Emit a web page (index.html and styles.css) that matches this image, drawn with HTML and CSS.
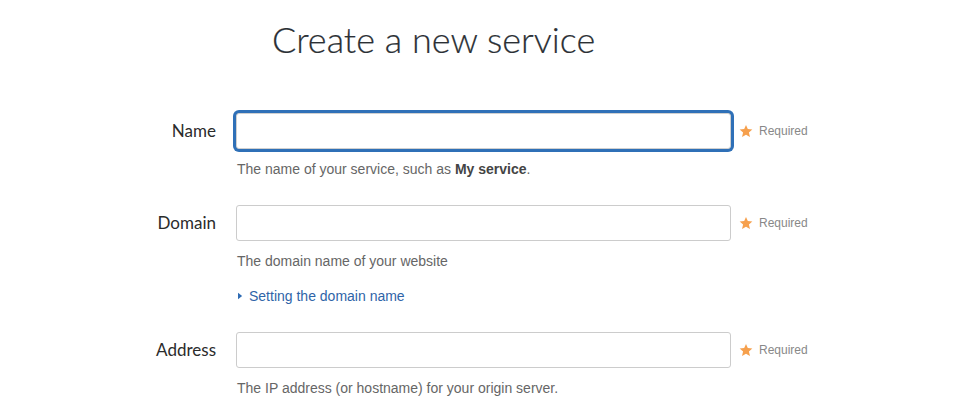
FILE: index.html
```html
<!DOCTYPE html>
<html>
<head>
<meta charset="utf-8">
<link rel="stylesheet" href="styles.css">
</head>
<body>
<div class="page">
  <h1 class="title">Create a new service</h1>
  <form class="form">
    <div class="row">
      <label class="label" for="name">Name</label>
      <div class="field">
        <input class="input focused" id="name" type="text">
        <p class="help">The name of your service, such as <b>My service</b>.</p>
      </div>
      <div class="req"><svg class="star" viewBox="0 0 24 24" width="14" height="14"><path d="M12 1.5l3.1 7.2 7.8.7-5.9 5.2 1.8 7.7L12 18.3l-6.8 4 1.8-7.7L1.1 9.4l7.8-.7z" fill="#f6a04d"/></svg><span>Required</span></div>
    </div>
    <div class="row">
      <label class="label" for="domain">Domain</label>
      <div class="field">
        <input class="input" id="domain" type="text">
        <p class="help">The domain name of your website</p>
        <a class="link" href="#"><svg class="tri" viewBox="0 0 6 8" width="5" height="8"><path d="M0 0L5 4L0 8z" fill="#2f6cb4"/></svg>Setting the domain name</a>
      </div>
      <div class="req"><svg class="star" viewBox="0 0 24 24" width="14" height="14"><path d="M12 1.5l3.1 7.2 7.8.7-5.9 5.2 1.8 7.7L12 18.3l-6.8 4 1.8-7.7L1.1 9.4l7.8-.7z" fill="#f6a04d"/></svg><span>Required</span></div>
    </div>
    <div class="row">
      <label class="label" for="address">Address</label>
      <div class="field">
        <input class="input" id="address" type="text">
        <p class="help">The IP address (or hostname) for your origin server.</p>
      </div>
      <div class="req"><svg class="star" viewBox="0 0 24 24" width="14" height="14"><path d="M12 1.5l3.1 7.2 7.8.7-5.9 5.2 1.8 7.7L12 18.3l-6.8 4 1.8-7.7L1.1 9.4l7.8-.7z" fill="#f6a04d"/></svg><span>Required</span></div>
    </div>
  </form>
</div>
</body>
</html>
```
FILE: styles.css
```css
html, body {
  margin: 0;
  padding: 0;
  background: #fff;
}
.page {
  width: 973px;
  height: 409px;
  overflow: hidden;
}
.title {
  margin: 0;
  padding: 16px 0 0 272px;
  font-family: Lato, "Open Sans", sans-serif;
  font-weight: 300;
  font-size: 36px;
  line-height: 46px;
  color: #2b3035;
  -webkit-text-stroke: 0.2px #2b3035;
}
.form {
  display: flex;
  flex-direction: column;
  gap: 26px;
  padding-top: 51px;
}
.row {
  display: grid;
  grid-template-columns: 216px 495px auto;
  column-gap: 20px;
  align-items: start;
}
.label {
  text-align: right;
  font-family: Lato, "Open Sans", sans-serif;
  font-size: 17px;
  line-height: 36px;
  color: #2b2b2b;
}
.field {
  display: flex;
  flex-direction: column;
}
.input {
  box-sizing: border-box;
  width: 495px;
  height: 36px;
  margin: 0;
  border: 1px solid #cccccc;
  border-radius: 3px;
  background: #fff;
  outline: none;
}
.input.focused {
  box-shadow: 0 0 0 3px #2f70b7;
  border-color: #d0d0d0;
  border-radius: 3px;
}
.help {
  margin: 10px 0 0 1px;
  font-family: "Liberation Sans", Arial, sans-serif;
  font-size: 14px;
  line-height: 20px;
  color: #666;
}
.help b {
  color: #444;
}
.link {
  display: flex;
  align-items: center;
  gap: 6px;
  margin: 15px 0 0 2px;
  font-family: "Liberation Sans", Arial, sans-serif;
  font-size: 14px;
  line-height: 20px;
  color: #2f64a8;
  text-decoration: none;
}
.req {
  display: flex;
  align-items: center;
  gap: 6px;
  height: 36px;
  margin-left: -12px;
  font-family: "Liberation Sans", Arial, sans-serif;
  font-size: 12px;
  color: #888;
}
.star {
  display: block;
}
```
